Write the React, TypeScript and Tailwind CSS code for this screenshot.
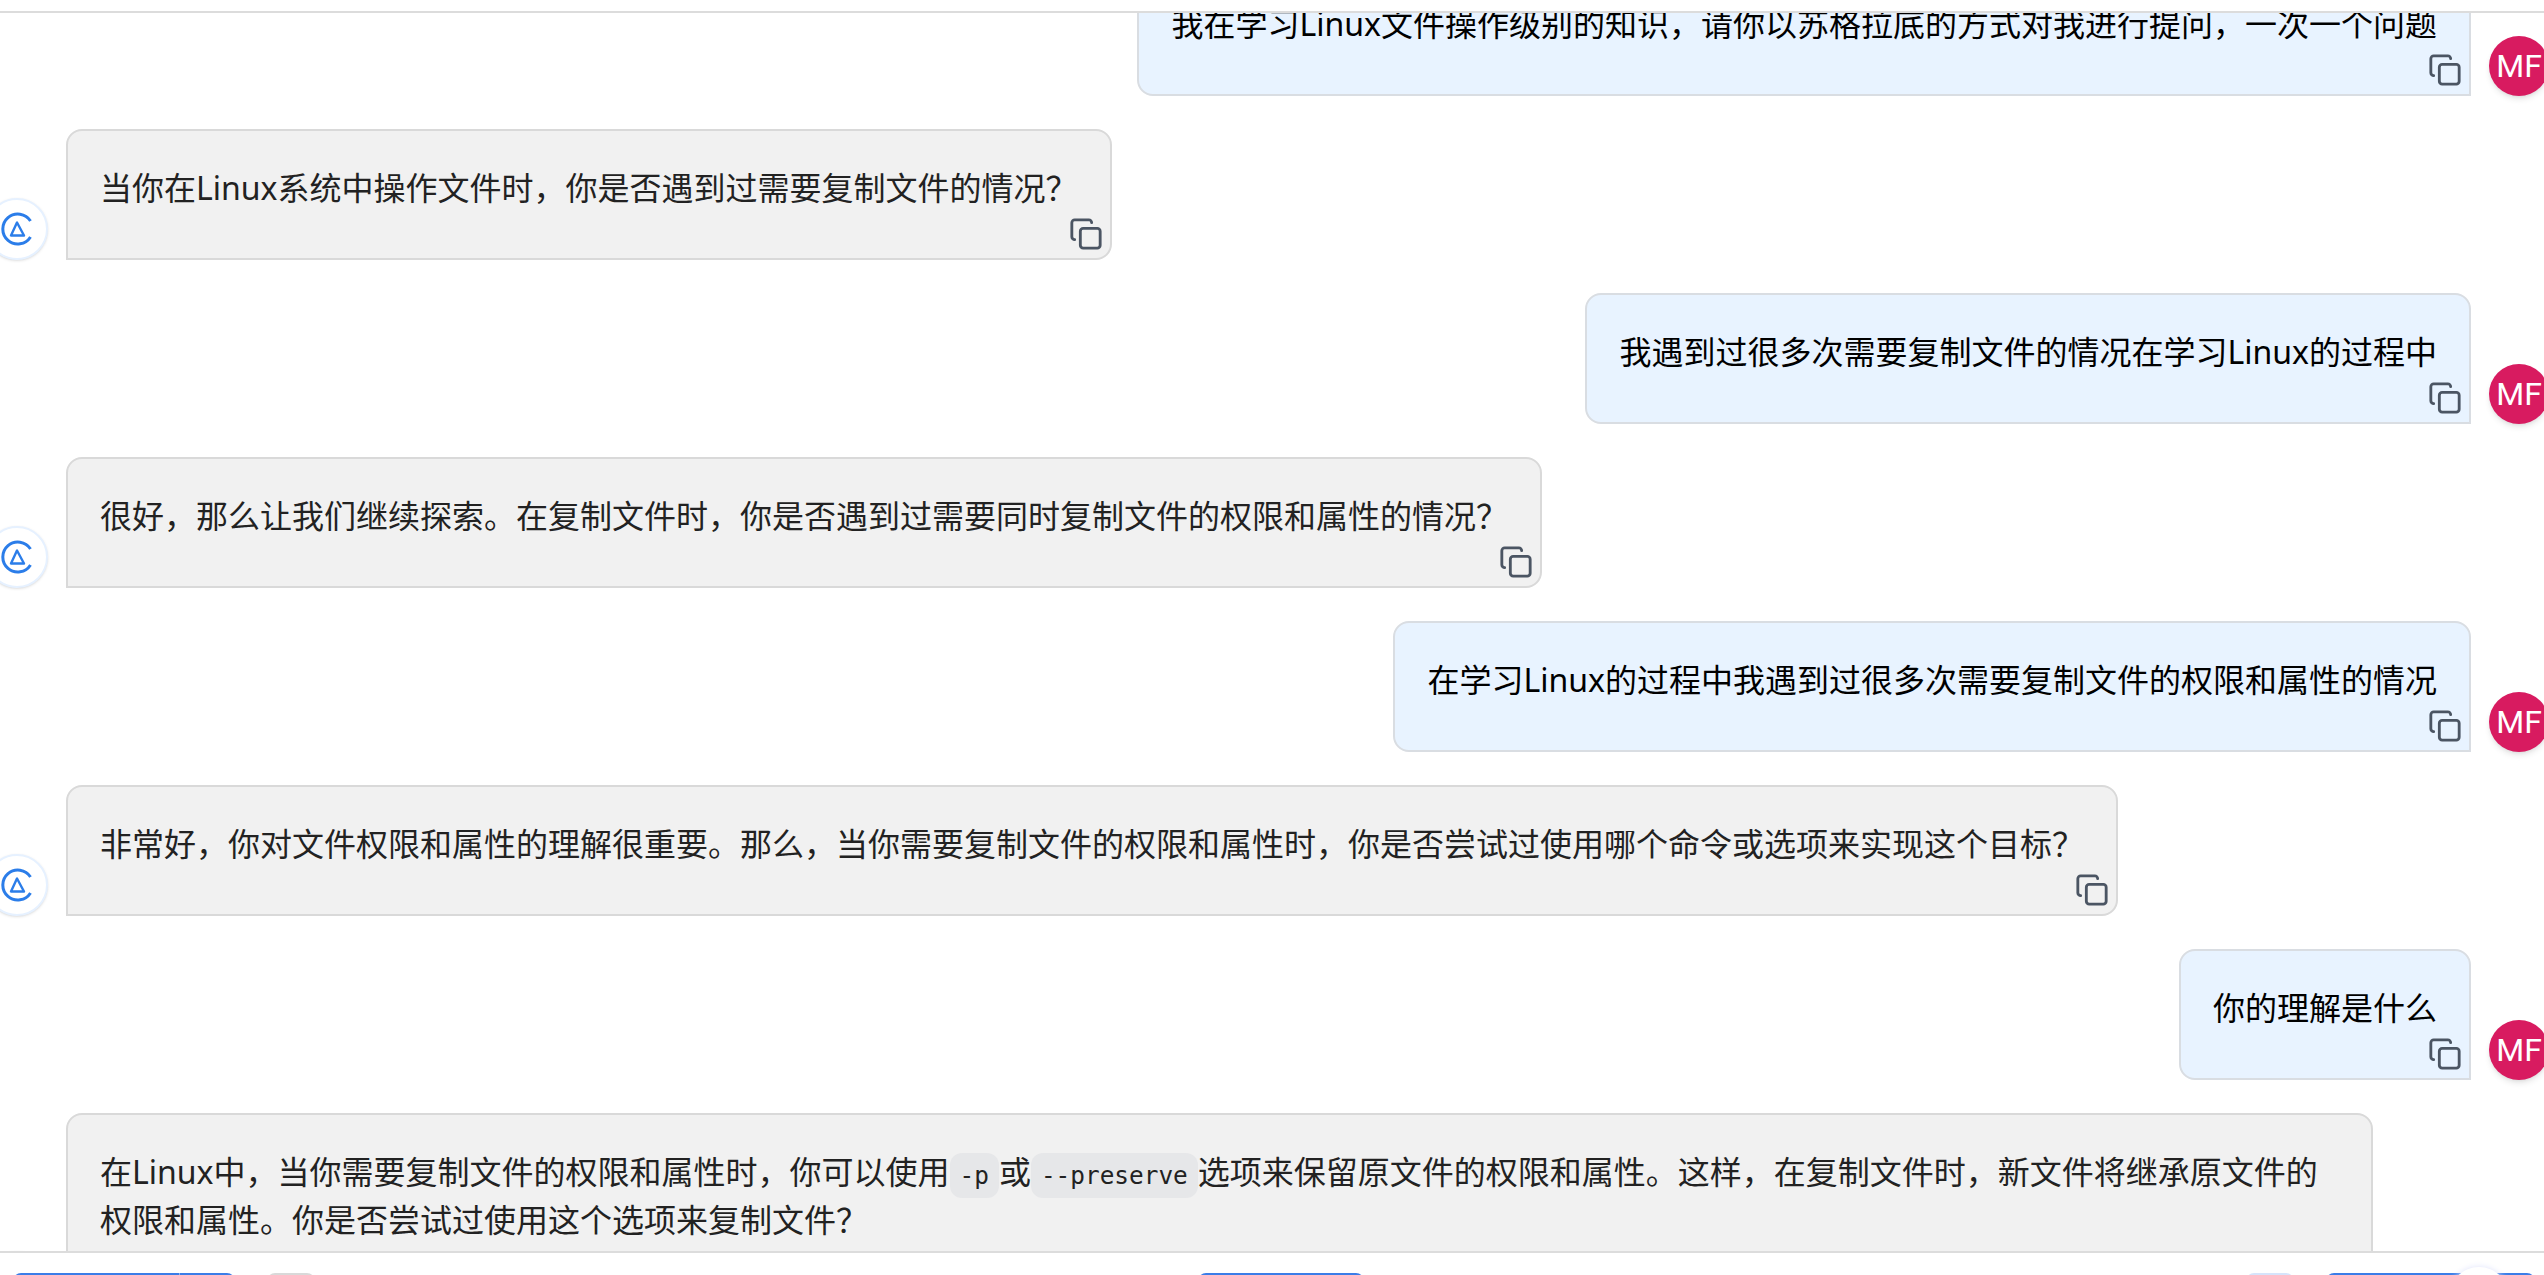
import React from 'react';

const CopyIcon = () => (
  <svg
    viewBox="0 0 24 24"
    fill="none"
    stroke="currentColor"
    strokeWidth="2"
    strokeLinecap="round"
    strokeLinejoin="round"
    className="absolute right-[7px] bottom-[7px] w-[34px] h-[34px] text-[#4b5563]"
  >
    <rect x="8" y="8" width="14" height="14" rx="2" />
    <path d="M4 16c-1.1 0-2-.9-2-2V4c0-1.1.9-2 2-2h10c1.1 0 2 .9 2 2" />
  </svg>
);

const BotAvatar = () => (
  <div className="w-[62px] h-[62px] shrink-0 rounded-full bg-white border-2 border-[#e6f1ff] shadow-sm flex items-center justify-center">
    <svg viewBox="0 0 36 36" className="w-[36px] h-[36px]" fill="none" stroke="#2b7de9" strokeWidth="3">
      <path d="M31.5 10A15 15 0 1 0 31.5 26" />
      <path d="M18 11.5L12 24.5H25Z" strokeWidth="2.4" strokeLinejoin="round" />
    </svg>
  </div>
);

const UserAvatar = () => (
  <div className="w-[60px] h-[60px] shrink-0 rounded-full bg-[#d81b60] text-white text-[32px] flex items-center justify-center shadow-md font-['Roboto',sans-serif]">
    MF
  </div>
);

const UserMsg = ({ children }: { children: React.ReactNode }) => (
  <div className="flex justify-end items-end gap-[18px] -mr-[5px]">
    <div className="relative bg-[#e8f3ff] border-2 border-[#d9dde2] rounded-t-2xl rounded-bl-2xl px-[32px] pt-[33px] pb-[46px] text-[32px] leading-[48px] text-black">
      {children}
      <CopyIcon />
    </div>
    <UserAvatar />
  </div>
);

const BotMsg = ({ children, className = '' }: { children: React.ReactNode; className?: string }) => (
  <div className="flex items-end gap-[18px] -ml-[14px]">
    <BotAvatar />
    <div className={`relative bg-[#f1f1f1] border-2 border-[#d9d9d9] rounded-t-2xl rounded-br-2xl px-[32px] pt-[33px] pb-[46px] text-[32px] leading-[48px] text-[#222222] ${className}`}>
      {children}
      <CopyIcon />
    </div>
  </div>
);

const Code = ({ children }: { children: React.ReactNode }) => (
  <code className="bg-[#e6e7e9] rounded-xl px-[10px] py-[8px] leading-none font-['DejaVu_Sans_Mono',monospace] text-[24.4px]">
    {children}
  </code>
);

export default function App() {
  return (
    <div className="h-screen overflow-hidden flex flex-col bg-white font-['Noto_Sans','Noto_Sans_CJK_SC',sans-serif]">
      {/* top strip */}
      <div className="h-[13px] shrink-0 border-b-2 border-[#dcdcdc]" />

      {/* messages */}
      <div className="flex-1 min-h-0 overflow-hidden">
        <div className="flex flex-col gap-[33px] -mt-[48px]">
          <UserMsg>我在学习Linux文件操作级别的知识，请你以苏格拉底的方式对我进行提问，一次一个问题</UserMsg>
          <BotMsg>当你在Linux系统中操作文件时，你是否遇到过需要复制文件的情况？</BotMsg>
          <UserMsg>我遇到过很多次需要复制文件的情况在学习Linux的过程中</UserMsg>
          <BotMsg>很好，那么让我们继续探索。在复制文件时，你是否遇到过需要同时复制文件的权限和属性的情况？</BotMsg>
          <UserMsg>在学习Linux的过程中我遇到过很多次需要复制文件的权限和属性的情况</UserMsg>
          <BotMsg>非常好，你对文件权限和属性的理解很重要。那么，当你需要复制文件的权限和属性时，你是否尝试过使用哪个命令或选项来实现这个目标？</BotMsg>
          <UserMsg>你的理解是什么</UserMsg>
          <BotMsg className="w-[2307px] min-h-[200px]">
            在Linux中，当你需要复制文件的权限和属性时，你可以使用<Code>-p</Code>或<Code>--preserve</Code>选项来保留原文件的权限和属性。这样，在复制文件时，新文件将继承原文件的权限和属性。你是否尝试过使用这个选项来复制文件？
          </BotMsg>
        </div>
      </div>

      {/* bottom toolbar, only its top edge is visible */}
      <div className="h-[24px] shrink-0 border-t-2 border-[#dcdcdc] pt-[20px] pl-[13px] pr-[9px] flex justify-between items-start overflow-hidden">
        <div className="flex gap-[32px]">
          <div className="w-[222px] h-[40px] rounded-lg bg-[#3b7de8] flex">
            <div className="w-[167px] border-r border-[#8fb6f2]" />
          </div>
          <div className="w-[48px] h-[40px] rounded-lg bg-[#d9d9d9]" />
        </div>
        <div className="w-[166px] h-[40px] rounded-lg bg-[#3b7de8]" />
        <div className="flex gap-[32px]">
          <div className="w-[48px] h-[40px] rounded-lg bg-[#d6e4fb]" />
          <div className="relative w-[209px] h-[40px] rounded-lg bg-[#3b7de8]">
            <div className="absolute left-[123px] -top-[6px] w-[60px] h-[60px] rounded-full bg-white shadow-[0_0_6px_#dfe3fb]" />
          </div>
        </div>
      </div>
    </div>
  );
}
